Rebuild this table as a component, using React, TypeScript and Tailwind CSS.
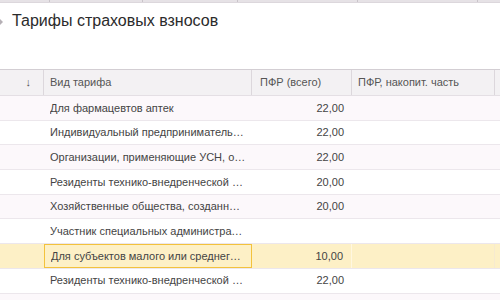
import React from "react";

const rows: { name: string; pfr: string; alt: boolean; sel?: boolean }[] = [
  { name: "Для фармацевтов аптек", pfr: "22,00", alt: true },
  { name: "Индивидуальный предприниматель, применяющий ПСН", pfr: "22,00", alt: false },
  { name: "Организации, применяющие УСН, основной вид деятельности", pfr: "22,00", alt: true },
  { name: "Резиденты технико-внедренческой особой экономической зоны", pfr: "20,00", alt: false },
  { name: "Хозяйственные общества, созданные бюджетными научными учреждениями", pfr: "20,00", alt: true },
  { name: "Участник специальных административных районов", pfr: "", alt: false },
  { name: "Для субъектов малого или среднего предпринимательства", pfr: "10,00", alt: false, sel: true },
  { name: "Резиденты технико-внедренческой особой экономической зоны", pfr: "22,00", alt: false },
  { name: "", pfr: "", alt: true },
];

export default function App() {
  return (
    <div
      className="w-[500px] h-[300px] overflow-hidden bg-white relative text-[#444]"
      style={{ fontFamily: '"Liberation Sans", Arial, sans-serif' }}
    >
      {/* top strip */}
      <div className="flex h-[3px] bg-[#e6e2e6] border-b border-[#dcd7dc]">
        <div className="w-[50px] border-r border-[#c9c4c9]" />
        <div className="w-[93px] border-r border-[#c9c4c9]" />
        <div className="w-[95px] border-r border-[#c9c4c9]" />
        <div className="w-[120px] border-r border-[#c9c4c9]" />
        <div className="w-[120px] border-r border-[#c9c4c9]" />
        <div className="flex-1" />
      </div>

      {/* title */}
      <div className="h-[66px] pt-[8px] pl-[12px] relative">
        <div className="text-[16px] leading-[20px] text-[#2b2b2b]">Тарифы страховых взносов</div>
        <svg className="absolute left-0 top-[16px]" width="3" height="6" viewBox="0 0 3 6">
          <path d="M0 0 L3 3 L0 6 Z" fill="#b5b0b5" />
        </svg>
      </div>

      {/* header */}
      <div className="flex h-[27px] border-t border-b border-t-[#d3ced3] border-b-[#e4dfe4] bg-[#f3f1f3] text-[11px] text-[#555]">
        <div className="w-[44px] flex items-center justify-end pr-[12px] border-r border-[#dcd7dc]">↓</div>
        <div className="w-[208px] flex items-center pl-[6px] border-r border-[#dcd7dc]">Вид тарифа</div>
        <div className="w-[100px] flex items-center pl-[8px] border-r border-[#dcd7dc]">ПФР (всего)</div>
        <div className="w-[143px] flex items-center pl-[6px] border-r border-[#dcd7dc]">ПФР, накопит. часть</div>
        <div className="flex-1" />
      </div>

      {/* rows */}
      {rows.map((r, i) => (
        <div
          key={i}
          className={
            "flex h-[24.7px] border-b border-[#ece7ec] text-[11px] text-[#444] " +
            (r.sel ? "bg-[#fdf0c6]" : r.alt ? "bg-[#fcf8fb]" : "bg-white")
          }
        >
          <div className="w-[44px]" />
          <div
            className={
              "w-[208px] flex items-center pl-[6px] pr-[6px] overflow-hidden " +
              (r.sel ? "border border-[#f3c23c]" : "")
            }
          >
            <span className="block truncate">{r.name}</span>
          </div>
          <div
            className={
              "w-[100px] flex items-center justify-end pr-[8px] " +
              (r.sel ? "border-r border-[#fff7e0]" : "")
            }
          >
            {r.pfr}
          </div>
          <div className={"w-[143px] " + (r.sel ? "border-r border-[#f6ead0]" : "")} />
          <div className="flex-1" />
        </div>
      ))}
    </div>
  );
}
